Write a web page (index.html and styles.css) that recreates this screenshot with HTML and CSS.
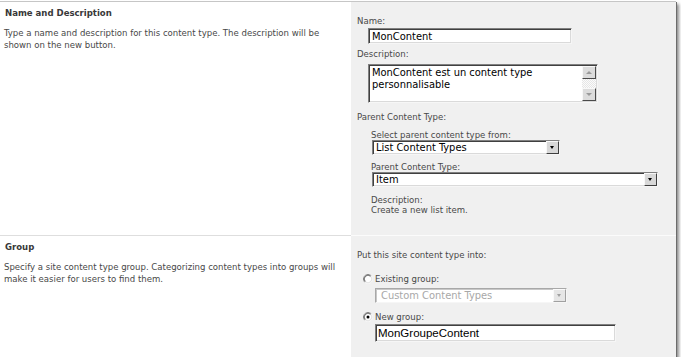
FILE: index.html
```html
<!DOCTYPE html>
<html lang="en">
<head>
  <meta charset="UTF-8">
  <title>New Site Content Type</title>
  <link rel="stylesheet" href="styles.css">
</head>
<body>
  <div class="frame">
    <!-- nom et description -->
    <div class="section first">
      <div class="info">
        <h3>Name and Description</h3>
        <p>Type a name and description for this content type. The description will be shown on the new button.</p>
      </div>
      <div class="fields">
        <div class="label">Name:</div>
        <div class="box text name-box">MonContent</div>
        <div class="label desc-label">Description:</div>
        <div class="box memo">
          <div class="memo-text">MonContent est un content type personnalisable</div>
          <div class="scroll">
            <span class="sbtn up"></span>
            <span class="track"></span>
            <span class="sbtn down"></span>
          </div>
        </div>
        <div class="label parent-label">Parent Content Type:</div>
        <div class="nested">
          <div class="label small">Select parent content type from:</div>
          <div class="box select list-select"><span>List Content Types</span><span class="drop"></span></div>
          <div class="label small gap">Parent Content Type:</div>
          <div class="box select item-select"><span>Item</span><span class="drop"></span></div>
          <div class="label small gap2">Description:<br>Create a new list item.</div>
        </div>
      </div>
    </div>

    <!-- groupe -->
    <div class="section second">
      <div class="info">
        <h3>Group</h3>
        <p>Specify a site content type group. Categorizing content types into groups will make it easier for users to find them.</p>
      </div>
      <div class="fields group-fields">
        <div class="label">Put this site content type into:</div>
        <div class="radio-row existing">
          <svg class="radio" viewBox="0 0 12 12">
            <circle cx="6" cy="6" r="5" fill="#fff"/>
            <path d="M9.9 2.1A5.5 5.5 0 0 0 2.1 9.9" fill="none" stroke="#8a8a8a"/>
            <path d="M2.1 9.9A5.5 5.5 0 0 0 9.9 2.1" fill="none" stroke="#fafafa"/>
            <path d="M9.2 2.8A4.5 4.5 0 0 0 2.8 9.2" fill="none" stroke="#3c3c3c"/>
            <path d="M2.8 9.2A4.5 4.5 0 0 0 9.2 2.8" fill="none" stroke="#d8d8d8"/>
          </svg>
          <span>Existing group:</span>
        </div>
        <div class="box select disabled"><span>Custom Content Types</span><span class="drop"></span></div>
        <div class="radio-row">
          <svg class="radio" viewBox="0 0 12 12">
            <circle cx="6" cy="6" r="5" fill="#fff"/>
            <path d="M9.9 2.1A5.5 5.5 0 0 0 2.1 9.9" fill="none" stroke="#8a8a8a"/>
            <path d="M2.1 9.9A5.5 5.5 0 0 0 9.9 2.1" fill="none" stroke="#fafafa"/>
            <path d="M9.2 2.8A4.5 4.5 0 0 0 2.8 9.2" fill="none" stroke="#3c3c3c"/>
            <path d="M2.8 9.2A4.5 4.5 0 0 0 9.2 2.8" fill="none" stroke="#d8d8d8"/>
            <circle cx="6" cy="6" r="1.8" fill="#000"/>
          </svg>
          <span>New group:</span>
        </div>
        <div class="box text group-box">MonGroupeContent</div>
      </div>
    </div>
  </div>
</body>
</html>
```

FILE: styles.css
```css
/* ---- base ---- */
* { margin:0; padding:0; box-sizing:border-box; }
body {
  background: #fff;
  color: #484848;
  font-family: "DejaVu Sans Condensed", "DejaVu Sans", sans-serif;
  font-stretch: condensed;
  font-size: 9.5px;
}

/* ---- cadre ---- */
.frame {
  width: 676px;
  height: 356px;
  margin-top: 1px;
  border-top: 1px solid #c6c6c6;
  box-shadow: 1px 1px 0 #6c6c6c, 3px 3px 3px rgba(0,0,0,0.45);
  display: grid;
  grid-template-rows: 233px 122px;
}
.section { display:grid; grid-template-columns:351px 1fr; }
.section.second { border-top:1px solid #dedede; }
.section.second .fields { border-top:1px solid #fbfbfb; margin-top:-1px; }

/* ---- colonne gauche ---- */
.info { padding:5px 6px 0 4px; }
.info h3 { font-size:9.5px; line-height:12px; color:#383838; padding-left:1px; }
.info p { margin-top:7.5px; line-height:12px; }

/* ---- colonne droite ---- */
.fields { background:#f0f0f0; padding:13px 0 0 6px; }
.group-fields { padding-top:13px; }
.label { line-height:11px; }
.label.small { line-height:10px; }
.desc-label { margin-top:4px; }
.parent-label { margin-top:8px; }
.nested { margin-left:14px; margin-top:8px; }
.nested .gap { margin-top:7px; }
.nested .gap2 { margin-top:8px; }

/* ---- champs ---- */
.box {
  background: #fff;
  color: #000;
  font-size: 11px;
  border: 1px solid;
  border-color: #808080 #f6f6f6 #f6f6f6 #808080;
  box-shadow: inset 1px 1px 0 #404040, inset -1px -1px 0 #dadada;
}
.text { padding:1px 3px 0; line-height:14px; }
.name-box { width:204px; height:16px; margin:2px 0 0 11px; }
.group-box {
  width: 241px;
  height: 18px;
  margin: 2px 0 0 18px;
  padding: 0 2px;
  font-family: "Liberation Sans", Arial, sans-serif;
  font-size: 11.5px;
  line-height: 16px;
}

.memo { width:230px; height:39px; margin:5px 0 0 11px; display:flex; }
.memo-text { flex:1; padding:2px 3px; line-height:12px; }
.scroll { width:14px; margin:1px 1px 1px 0; display:flex; flex-direction:column; }
.track { flex:1; background:repeating-conic-gradient(#e6e6e6 0 25%, #fbfbfb 0 50%) 0 0/2px 2px; }
.sbtn {
  position: relative;
  height: 13px;
  background: #dcdcdc;
  border: 1px solid;
  border-color: #f8f8f8 #4a4a4a #4a4a4a #f8f8f8;
}
.sbtn::after {
  content: "";
  position: absolute;
  left: 3px; top: 4px;
  border-left: 3px solid transparent;
  border-right: 3px solid transparent;
}
.sbtn.up::after { border-bottom:3px solid #9a9a9a; }
.sbtn.down::after { border-top:3px solid #9a9a9a; }

.select { height:15px; display:flex; align-items:center; padding-left:3px; line-height:13px; }
.list-select { width:188px; margin-left:1px; }
.item-select { width:286px; margin-left:1px; }
.select .drop {
  position: relative;
  width: 13px;
  height: 13px;
  margin-left: auto;
  background: #d8d8d8;
  border: 1px solid;
  border-color: #f8f8f8 #3e3e3e #3e3e3e #f8f8f8;
}
.select .drop::after {
  content: "";
  position: absolute;
  left: 3px; top: 4px;
  border-top: 3px solid #000;
  border-left: 2.5px solid transparent;
  border-right: 2.5px solid transparent;
}
.select.disabled {
  width: 192px;
  margin: 4px 0 0 18px;
  padding-left: 5px;
  color: #a8a8a8;
  border-color: #a8a8a8 #f6f6f6 #f6f6f6 #a8a8a8;
  box-shadow: inset 1px 1px 0 #c8c8c8;
}
.select.disabled .drop { background:#e6e6e6; border-color:#fafafa #a0a0a0 #a0a0a0 #fafafa; }
.select.disabled .drop::after { border-top-color:#a0a0a0; }

/* ---- boutons radio ---- */
.radio-row { display:flex; align-items:center; gap:2px; height:11px; margin:13px 0 0 6px; }
.radio-row:not(.existing) { margin-top:8px; }
.radio { width:10px; height:10px; }
```
